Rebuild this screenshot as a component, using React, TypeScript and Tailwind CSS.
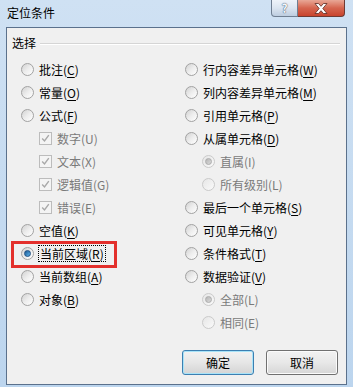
import React from 'react';

type Item = {
  label: string;
  key?: string;
  kind: 'radio' | 'check';
  sub?: boolean;
  disabled?: boolean;
  checked?: boolean;
  focus?: boolean;
};

const leftItems: Item[] = [
  { label: '批注', key: 'C', kind: 'radio' },
  { label: '常量', key: 'O', kind: 'radio' },
  { label: '公式', key: 'F', kind: 'radio' },
  { label: '数字(U)', kind: 'check', sub: true, disabled: true, checked: true },
  { label: '文本(X)', kind: 'check', sub: true, disabled: true, checked: true },
  { label: '逻辑值(G)', kind: 'check', sub: true, disabled: true, checked: true },
  { label: '错误(E)', kind: 'check', sub: true, disabled: true, checked: true },
  { label: '空值', key: 'K', kind: 'radio' },
  { label: '当前区域', key: 'R', kind: 'radio', checked: true, focus: true },
  { label: '当前数组', key: 'A', kind: 'radio' },
  { label: '对象', key: 'B', kind: 'radio' },
];

const rightItems: Item[] = [
  { label: '行内容差异单元格', key: 'W', kind: 'radio' },
  { label: '列内容差异单元格', key: 'M', kind: 'radio' },
  { label: '引用单元格', key: 'P', kind: 'radio' },
  { label: '从属单元格', key: 'D', kind: 'radio' },
  { label: '直属(I)', kind: 'radio', sub: true, disabled: true, checked: true },
  { label: '所有级别(L)', kind: 'radio', sub: true, disabled: true },
  { label: '最后一个单元格', key: 'S', kind: 'radio' },
  { label: '可见单元格', key: 'Y', kind: 'radio' },
  { label: '条件格式', key: 'T', kind: 'radio' },
  { label: '数据验证', key: 'V', kind: 'radio' },
  { label: '全部(L)', kind: 'radio', sub: true, disabled: true, checked: true },
  { label: '相同(E)', kind: 'radio', sub: true, disabled: true },
];

const Radio = ({ checked, disabled }: { checked?: boolean; disabled?: boolean }) => (
  <span
    className={
      'w-[13px] h-[13px] rounded-full border flex items-center justify-center shrink-0 ' +
      (disabled
        ? 'border-[#cacaca] bg-gradient-to-br from-[#e6e6e6] to-[#fafafa]'
        : 'border-[#a2a2a2] bg-gradient-to-br from-[#d2d2d2] via-[#ededed] to-[#ffffff]')
    }
  >
    {checked && (
      <span
        className={
          'w-[7px] h-[7px] rounded-full ' +
          (disabled
            ? 'bg-gradient-to-br from-[#b5b5b5] to-[#dadada] border border-[#acacac]'
            : 'bg-gradient-to-br from-[#1c5a94] to-[#5fb6ee] border border-[#1d4f82]')
        }
      />
    )}
  </span>
);

const Check = () => (
  <span className="w-[13px] h-[13px] border border-[#bcbcbc] bg-[#f4f4f4] flex items-center justify-center shrink-0">
    <svg width="9" height="9" viewBox="0 0 9 9">
      <path d="M1.2 4.6 L3.5 7 L7.8 1.2" fill="none" stroke="#a8a8a8" strokeWidth="1.4" />
    </svg>
  </span>
);

const Row = ({ item, subIndent }: { item: Item; subIndent: string }) => (
  <div className={'relative h-[23px] flex items-center gap-[5px] ' + (item.sub ? subIndent : '')}>
    {item.focus && (
      <div className="absolute left-[-10px] top-[-1px] w-[106px] h-[27px] border-[3px] border-[#e3302c]" />
    )}
    {item.kind === 'radio' ? <Radio checked={item.checked} disabled={item.disabled} /> : <Check />}
    <span
      className={
        'leading-[15px] whitespace-nowrap ' +
        (item.disabled ? 'text-[#7a7a7a]' : 'text-black') +
        (item.focus ? ' outline outline-1 outline-dotted outline-black px-[1px]' : '')
      }
    >
      {item.label}
      {item.key && (
        <>
          (<span className="underline underline-offset-2">{item.key}</span>)
        </>
      )}
    </span>
  </div>
);

const Button = ({ label, primary }: { label: string; primary?: boolean }) => (
  <div
    className={
      'w-[72px] h-[25px] rounded-[3px] border flex items-center justify-center text-black ' +
      (primary
        ? 'border-[#3c7fb1] shadow-[inset_0_0_0_1px_#a8e3f8] bg-gradient-to-b from-[#f2f2f2] via-[#e6e6e6] to-[#d4d4d4]'
        : 'border-[#707070] shadow-[inset_0_0_0_1px_#fbfbfb] bg-gradient-to-b from-[#f2f2f2] via-[#e8e8e8] to-[#d6d6d6]')
    }
  >
    {label}
  </div>
);

export default function App() {
  return (
    <div
      className="w-[353px] h-[387px] overflow-hidden bg-gradient-to-b from-[#cfe1f3] to-[#bcd5ee] text-[12px]"
      style={{ fontFamily: '"Noto Sans CJK SC", "Microsoft YaHei", sans-serif' }}
    >
      {/* title bar */}
      <div className="h-[27px] flex items-start">
        <div className="pl-[7px] pt-[5px] text-[12px] leading-[16px] text-black flex-1">定位条件</div>
        <div className="flex mr-[8px]">
          <div className="w-[27px] h-[17px] rounded-bl-[4px] border border-t-0 border-[#6f7f92] bg-gradient-to-b from-[#eef3f9] via-[#dbe5f0] to-[#bdcde0] flex items-center justify-center">
            <span className="text-[12px] leading-none font-bold text-[#f4f7fb] [text-shadow:0_0_1px_#42536a,0_0_1px_#42536a]">?</span>
          </div>
          <div className="w-[47px] h-[17px] rounded-br-[4px] border border-t-0 border-l-0 border-[#6e3a33] bg-gradient-to-b from-[#e8a796] via-[#d5654f] to-[#c8432d] flex items-center justify-center">
            <svg width="14" height="11" viewBox="0 0 14 11">
              <path
                d="M1 0.5 H4.5 L7 3.3 L9.5 0.5 H13 L8.8 5.5 L13 10.5 H9.5 L7 7.7 L4.5 10.5 H1 L5.2 5.5 Z"
                fill="#ffffff"
                stroke="#5a2a22"
                strokeWidth="0.8"
                strokeLinejoin="round"
              />
            </svg>
          </div>
        </div>
      </div>

      {/* client area */}
      <div className="ml-[6px] w-[341px] h-[358px] border border-[#5b718c] bg-[#f0f0f0]">
        <div className="pt-[7px] pl-[5px] pr-[6px] flex items-center gap-[4px]">
          <span className="leading-[16px] text-black">选择</span>
          <div className="flex-1 border-t border-[#d5d5d5] shadow-[0_1px_0_#ffffff]" />
        </div>

        <div className="mt-[7px] flex">
          <div className="w-[164px] pl-[14px] flex flex-col">
            {leftItems.map((it) => (
              <Row key={it.label} item={it} subIndent="ml-[18px]" />
            ))}
          </div>
          <div className="pl-[14px] flex flex-col">
            {rightItems.map((it) => (
              <Row key={it.label} item={it} subIndent="ml-[17px]" />
            ))}
          </div>
        </div>

        <div className="mt-[16px] flex justify-end gap-[12px] pr-[8px]">
          <Button label="确定" primary />
          <Button label="取消" />
        </div>
      </div>
    </div>
  );
}
